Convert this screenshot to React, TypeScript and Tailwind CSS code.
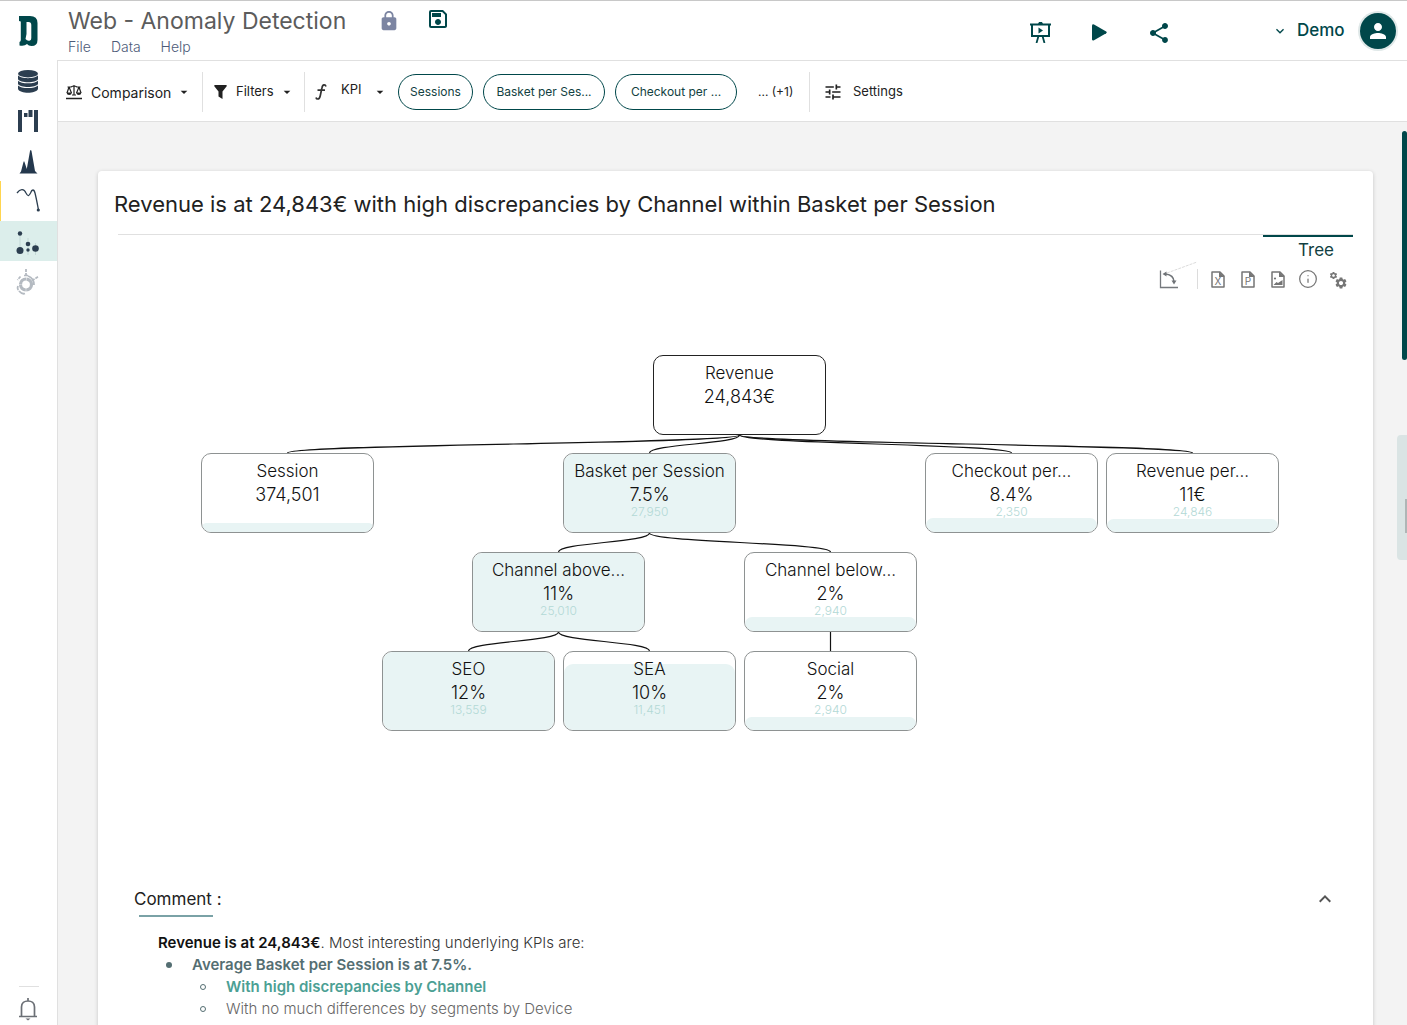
import { ReactNode } from "react";
import {
  MdArrowDropDown,
  MdExpandLess,
  MdExpandMore,
  MdLock,
  MdOutlineSave,
  MdPerson,
  MdSettings,
  MdShare,
  MdTune,
} from "react-icons/md";
import { Info } from "lucide-react";

const NODE_WIDTH = 173;
const NODE_HEIGHT = 80;

type TreeNode = {
  id: string;
  parent?: string;
  x: number;
  y: number;
  label: string;
  value: string;
  count?: string;
  fill: number;
};

const nodes: TreeNode[] = [
  { id: "revenue", x: 452, y: 0, label: "Revenue", value: "24,843€", fill: 0 },
  { id: "session", parent: "revenue", x: 0, y: 98, label: "Session", value: "374,501", fill: 9 },
  { id: "basket", parent: "revenue", x: 362, y: 98, label: "Basket per Session", value: "7.5%", count: "27,950", fill: 78 },
  { id: "checkout", parent: "revenue", x: 724, y: 98, label: "Checkout per...", value: "8.4%", count: "2,350", fill: 14 },
  { id: "perCheckout", parent: "revenue", x: 905, y: 98, label: "Revenue per...", value: "11€", count: "24,846", fill: 13 },
  { id: "above", parent: "basket", x: 271, y: 197, label: "Channel above...", value: "11%", count: "25,010", fill: 78 },
  { id: "below", parent: "basket", x: 543, y: 197, label: "Channel below...", value: "2%", count: "2,940", fill: 14 },
  { id: "seo", parent: "above", x: 181, y: 296, label: "SEO", value: "12%", count: "13,559", fill: 78 },
  { id: "sea", parent: "above", x: 362, y: 296, label: "SEA", value: "10%", count: "11,451", fill: 66 },
  { id: "social", parent: "below", x: 543, y: 296, label: "Social", value: "2%", count: "2,940", fill: 13 },
];

function linkPath(parent: TreeNode, child: TreeNode) {
  const sx = parent.x + NODE_WIDTH / 2;
  const sy = parent.y + NODE_HEIGHT;
  const tx = child.x + NODE_WIDTH / 2;
  const ty = child.y;
  const my = (sy + ty) / 2;
  return `M${sx} ${sy}C${sx} ${my} ${tx} ${my} ${tx} ${ty}`;
}

function Logo() {
  return (
    <svg width="20" height="31" viewBox="0 0 20 31" fill="#00474a" aria-hidden="true">
      <path
        fillRule="evenodd"
        d="M0 0H11Q18.500 0 18.500 7V24Q18.500 30 12.500 30Q9.500 30 8 28Q5.500 30.500 0.500 29.500V26Q1.800 25.500 1.800 24V5.500L0 5ZM7.500 6V18L6.500 23Q8.500 25.500 11 24.500Q12.300 24 12.300 22V9Q12.300 6 9.500 6Z"
      />
    </svg>
  );
}

function DatabaseIcon() {
  return (
    <svg width="20" height="23" viewBox="0 0 20 23" fill="#2c3e50" aria-hidden="true">
      <ellipse cx="10" cy="3.700" rx="10" ry="3.700" />
      <path d="M0 5.600C3 9 17 9 20 5.600V9.300C18 13.300 2 13.300 0 9.300Z" />
      <path d="M0 10.800C3 14.200 17 14.200 20 10.800V14C18 18 2 18 0 14Z" />
      <path d="M0 15.500C3 18.900 17 18.900 20 15.500V19C18 24 2 24 0 19Z" />
    </svg>
  );
}

function WaterfallIcon() {
  return (
    <svg width="20" height="22" viewBox="0 0 20 22" fill="#2c3e50" aria-hidden="true">
      <path d="M0 0H4V22H0ZM6 3H9.500V7H6ZM10.500 0H14.500V7H10.500ZM16 0H20V22H16Z" />
    </svg>
  );
}

function PeaksIcon() {
  return (
    <svg width="20" height="25" viewBox="0 0 20 25" fill="#24384d" aria-hidden="true">
      <path d="M1.500 24.500L3 22.500L5.500 13Q6 11.500 6.500 13L8.800 20L12 2Q12.800 0 13.500 2L17 22L19.500 24.500Z" />
    </svg>
  );
}

function CurveIcon() {
  return (
    <svg width="24" height="24" viewBox="0 0 24 24" aria-hidden="true">
      <path d="M1 5C4 1 8 0 10 5C12 9 13 8 14.500 5C16 1 18 1 19 5C20.500 11 21.500 17 22.500 22" fill="none" stroke="#2c3e50" strokeWidth="1.300" />
      <circle cx="22.300" cy="22" r="1.600" fill="#2c3e50" />
    </svg>
  );
}

function DotsIcon() {
  return (
    <svg width="24" height="24" viewBox="0 0 24 24" fill="#2c3e50" aria-hidden="true">
      <path d="M4 3V19M12 7V24M19.500 12V24" stroke="#c3d8d6" strokeWidth="1" />
      <circle cx="4" cy="2.500" r="2.200" />
      <circle cx="4" cy="19.500" r="3.500" />
      <circle cx="12" cy="13" r="2.300" />
      <circle cx="12" cy="19" r="1.700" />
      <circle cx="19.500" cy="17.500" r="3.300" />
    </svg>
  );
}

function RingIcon() {
  return (
    <svg width="24" height="27" viewBox="0 0 24 27" fill="none" stroke="#b4bac1" aria-hidden="true">
      <circle cx="10" cy="16.500" r="5.500" strokeWidth="3.200" strokeDasharray="8.200 0.440" />
      <path d="M3 23Q6 26.500 9 25.500M2 18Q1 21 2.500 22M12 8Q18 10 18 17" strokeWidth="1.800" />
      <path d="M4.500 8.500L1.500 12M10 8V1M16 12.500L22.500 8.500" strokeWidth="1.800" strokeDasharray="3 1" />
      <path d="M8 7.500H12" strokeWidth="1.500" />
    </svg>
  );
}

function BellIcon() {
  return (
    <svg width="20" height="23" viewBox="0 0 20 23" fill="none" stroke="#6b6f75" strokeWidth="1.700" aria-hidden="true">
      <path d="M10 0V3M1 18.500H19M3.500 18V9C3.500 5 6.500 3 10 3S16.500 5 16.500 9V18" />
      <path d="M7.500 20.500H12.500L10 22.500Z" fill="#6b6f75" stroke="none" />
    </svg>
  );
}

function ScaleIcon() {
  return (
    <svg width="16" height="16" viewBox="0 0 16 16" fill="none" stroke="#212121" strokeWidth="1.200" aria-hidden="true">
      <path d="M8 1V11M1.500 3H5Q8 1 11 3H14.500M3 3L1 9M3 3L5.500 9M13 3L10.500 9M13 3L15 9M6 11H10" />
      <path d="M0.500 8.500H6Q5.500 11 3.200 11T0.500 8.500ZM10 8.500H15.500Q15 11 12.800 11T10 8.500Z" fill="#212121" stroke="none" />
      <path d="M0 14.500H16" strokeWidth="1.500" />
    </svg>
  );
}

function FunnelIcon() {
  return (
    <svg width="13" height="14" viewBox="0 0 13 14" fill="#212121" aria-hidden="true">
      <path d="M0.500 0H12.500Q13 1 12.500 1.500L8.500 6.500V14L4.500 11.500V6.500L0.500 1.500Q0 1 0.500 0Z" />
    </svg>
  );
}

function FunctionIcon() {
  return (
    <svg width="12" height="16" viewBox="0 0 12 16" fill="none" stroke="#333" strokeWidth="1.700" aria-hidden="true">
      <path d="M11 2.500Q10.500 0.800 9 0.900Q7.400 1 6.900 4L5.200 12Q4.600 15 2.700 15Q1.300 15 1 13.500M2.500 6.200H10" />
    </svg>
  );
}

function PresentIcon() {
  return (
    <svg width="21" height="21" viewBox="0 0 21 21" fill="none" stroke="#00474a" strokeWidth="2" aria-hidden="true">
      <path d="M0 2.500H21M2 2V14M19 2V14M1 14H20" />
      <path d="M8.500 14L6.500 21M12.500 14L14.500 21" strokeWidth="1.800" />
      <path d="M8 2L9 0H12L13 2ZM8.500 5.500L13 8.500L8.500 11.500Z" fill="#00474a" stroke="none" />
    </svg>
  );
}

function PlayIcon() {
  return (
    <svg width="15" height="17" viewBox="0 0 15 17" fill="#00474a" aria-hidden="true">
      <path d="M0 1.500Q0.300 -0.200 2 0.500L14.200 7.500Q15.300 8.300 14.200 9.300L2 16.300Q0.300 17 0 15.500Z" />
    </svg>
  );
}

function AxesIcon() {
  return (
    <svg width="40" height="28" viewBox="0 0 40 28" fill="none" aria-hidden="true">
      <path d="M2.500 9.500V26.500H20" stroke="#75797d" strokeWidth="1.300" />
      <path d="M8 13Q15.500 14 16 20.500" stroke="#6f7377" strokeWidth="1.500" />
      <path d="M4.500 13L8.500 10.500V15.500ZM13.500 19.500H18.500L16 23.500Z" fill="#6f7377" />
      <path d="M9 12L39 1" stroke="#dcdcdc" strokeDasharray="3 1" />
    </svg>
  );
}

function FileIcon({ letter }: { letter?: string }) {
  return (
    <svg width="14" height="17" viewBox="0 0 14 17" fill="none" stroke="#757575" strokeWidth="1.500" aria-hidden="true">
      <path d="M1 1H9L13 5V16H1Z" strokeLinejoin="round" />
      <path d="M8 0.500L13.500 6H8Z" fill="#757575" stroke="none" />
      {letter ? (
        <text x="7" y="14" textAnchor="middle" fontSize="10" fontFamily="Inter, sans-serif" fill="#757575" stroke="none">
          {letter}
        </text>
      ) : (
        <>
          <path d="M2.500 14L5.500 11L7 12L11.500 9V14Z" fill="#757575" stroke="none" />
          <circle cx="4" cy="7.500" r="1.100" fill="#757575" stroke="none" />
        </>
      )}
    </svg>
  );
}

function SideItem({ label, active, marked, children }: { label: string; active?: boolean; marked?: boolean; children: ReactNode }) {
  return (
    <button
      aria-label={label}
      className={`flex h-10 w-full items-center justify-center pr-[2px] ${active ? "bg-[#dceeeb] pt-1" : ""} ${marked ? "border-l border-[#ffd54f] pb-[2px]" : ""}`}
    >
      {children}
    </button>
  );
}

function Chip({ children, wide }: { children: ReactNode; wide?: boolean }) {
  return (
    <button className={`h-9 shrink-0 rounded-full border border-[#00474a] text-center text-[12px] text-[#123f42] ${wide ? "w-[122px]" : "w-[75px]"}`}>
      {children}
    </button>
  );
}

function Divider() {
  return <div className="h-10 w-px shrink-0 bg-[#e0e0e0]" />;
}

function ToolButton({ label, children }: { label: string; children: ReactNode }) {
  return (
    <button aria-label={label} className="flex h-[30px] w-[30px] items-center justify-center text-[#757575]">
      {children}
    </button>
  );
}

function BulletRow({ hollow, children }: { hollow?: boolean; children: ReactNode }) {
  return (
    <div className="flex items-center">
      <span className="flex w-[34px] shrink-0 pl-2" aria-hidden="true">
        <span className={`h-[6px] w-[6px] rounded-full ${hollow ? "border border-[#546e72]" : "bg-[#546e72]"}`} />
      </span>
      {children}
    </div>
  );
}

function KpiTree() {
  const byId = new Map(nodes.map((node) => [node.id, node]));
  return (
    <div className="relative mx-auto h-[376px] w-[1078px]">
      <svg width="1078" height="376" className="absolute inset-0" fill="none" stroke="#111" strokeWidth="1.200" aria-hidden="true">
        {nodes.map((node) => {
          const parent = node.parent ? byId.get(node.parent) : undefined;
          return parent ? <path key={node.id} d={linkPath(parent, node)} /> : null;
        })}
      </svg>
      {nodes.map((node) => (
        <div
          key={node.id}
          style={{ left: node.x, top: node.y }}
          className={`absolute h-[80px] w-[173px] overflow-hidden rounded-[10px] border text-center font-light text-[#111] ${node.parent ? "border-[#8e9292]" : "border-[#222]"}`}
        >
          <div style={{ height: node.fill }} className="absolute inset-x-0 bottom-0 rounded-[9px] bg-[#e8f4f4]" />
          <div className="relative pt-[5px] whitespace-nowrap">
            <p className="text-[17px] leading-6">{node.label}</p>
            <p className="text-[18px] leading-6">{node.value}</p>
            {node.count && <p className="text-[12px] leading-[10px] text-[#b3d9d6]">{node.count}</p>}
          </div>
        </div>
      ))}
    </div>
  );
}

export default function App() {
  return (
    <div className="flex h-screen flex-col overflow-hidden bg-white font-['Inter',sans-serif] text-[#212121]">
      <header className="flex h-[61px] shrink-0 border-t border-t-[#c8c8c8]">
        <div className="flex w-[57px] shrink-0 justify-center pt-[15px]">
          <Logo />
        </div>
        <div className="flex min-w-0 grow border-b border-[#e0e0e0]">
          <div className="pl-[11px] pt-1">
            <div className="flex h-8 items-center">
              <h1 className="w-[310px] text-[23px] leading-8 whitespace-nowrap text-[#5c5c5c]">Web - Anomaly Detection</h1>
              <button aria-label="Lock" className="text-[#7c85a2]"><MdLock size={22} /></button>
              <button aria-label="Save" className="mb-1 ml-[26px] text-[#00474a]"><MdOutlineSave size={24} /></button>
            </div>
            <nav className="flex gap-5 text-[14px] leading-5 font-light text-[#4d5b78]">
              <a href="#file">File</a>
              <a href="#data">Data</a>
              <a href="#help">Help</a>
            </nav>
          </div>
          <div className="ml-auto flex items-center pt-1">
            <button aria-label="Present" className="flex w-[59px] justify-center"><PresentIcon /></button>
            <button aria-label="Play" className="flex w-[59px] justify-center"><PlayIcon /></button>
            <button aria-label="Share" className="flex w-[59px] justify-center text-[#00474a]"><MdShare size={24} /></button>
          </div>
          <button className="mr-[11px] ml-[84px] flex items-center text-[#00474a]">
            <MdExpandMore size={16} />
            <span className="ml-[9px] w-[63px] pb-[2px] text-left text-[17px] leading-5 font-medium">Demo</span>
            <span className="flex h-9 w-9 items-center justify-center rounded-full bg-[#00474a] text-white ring-2 ring-[#dfe8e8]">
              <MdPerson size={24} />
            </span>
          </button>
        </div>
      </header>

      <div className="flex min-h-0 grow">
        <aside className="flex w-[58px] shrink-0 flex-col border-r border-[#e0e0e0]">
          <SideItem label="Data sources"><DatabaseIcon /></SideItem>
          <SideItem label="Waterfall"><WaterfallIcon /></SideItem>
          <SideItem label="Distribution"><PeaksIcon /></SideItem>
          <SideItem label="Trend" marked><CurveIcon /></SideItem>
          <SideItem label="Anomalies" active><DotsIcon /></SideItem>
          <SideItem label="Sunburst"><RingIcon /></SideItem>
          <div className="mx-auto mt-auto w-5 border-t border-[#e0e0e0]" />
          <button aria-label="Notifications" className="flex h-[38px] items-center justify-center pt-[6px] pr-[2px]"><BellIcon /></button>
        </aside>

        <div className="flex min-w-0 grow flex-col">
          <div className="flex h-[61px] shrink-0 items-center border-b border-[#e0e0e0] pt-[2px] text-[13px] whitespace-nowrap">
            <button className="flex w-36 items-center pl-2">
              <ScaleIcon />
              <span className="w-[85px] pl-[9px] text-left text-[14px]">Comparison</span>
              <MdArrowDropDown size={16} className="ml-[9px]" />
            </button>
            <Divider />
            <button className="flex w-[101px] items-center pl-[11px]">
              <FunnelIcon />
              <span className="w-[52px] pl-[9px] text-left">Filters</span>
              <MdArrowDropDown size={16} />
            </button>
            <Divider />
            <button className="flex w-[93px] items-center pl-[10px]">
              <FunctionIcon />
              <span className="w-[45px] pb-1 pl-[14px] text-left">KPI</span>
              <MdArrowDropDown size={16} />
            </button>
            <div className="flex gap-[10px]">
              <Chip>Sessions</Chip>
              <Chip wide>Basket per Ses...</Chip>
              <Chip wide>Checkout per ...</Chip>
            </div>
            <button className="w-[72px] pl-[21px] text-left text-[12px]">... (+1)</button>
            <Divider />
            <button className="flex items-center gap-[10px] pl-[13px]">
              <MdTune size={20} />
              Settings
            </button>
          </div>

          <main className="relative min-h-0 grow overflow-hidden bg-[#f3f3f3] pt-[49px] pr-[34px] pl-10">
            <article className="rounded-[4px] bg-white pb-8 shadow-[0_1px_4px_rgba(0,0,0,0.18)]">
              <h2 className="px-4 pt-5 text-[22px] leading-[26px]">
                Revenue is at 24,843€ with high discrepancies by Channel within Basket per Session
              </h2>
              <div className="mx-5 mt-[17px] flex justify-end border-t border-[#e0e0e0]">
                <button className="w-[90px] border-t-2 border-[#00474a] pr-[19px] text-right text-[17px] leading-[26px] text-[#123f42]">Tree</button>
              </div>
              <div className="mt-px mr-5 flex h-[30px] items-center justify-end">
                <button aria-label="Rotate axes" className="-mr-px mb-2"><AxesIcon /></button>
                <div className="mr-[5px] h-5 w-px bg-[#dcdcdc]" />
                <ToolButton label="Export to Excel"><FileIcon letter="X" /></ToolButton>
                <ToolButton label="Export to PowerPoint"><FileIcon letter="P" /></ToolButton>
                <ToolButton label="Export as image"><FileIcon /></ToolButton>
                <ToolButton label="Information"><Info size={20} strokeWidth={1.5} /></ToolButton>
                <ToolButton label="Options">
                  <MdSettings size={9} className="mb-2" />
                  <MdSettings size={14} className="-ml-1 mt-2" />
                </ToolButton>
              </div>

              <div className="mt-[61px] pl-[9px]">
                <KpiTree />
              </div>

              <section className="mt-[156px] pr-9 pl-9">
                <div className="flex items-center justify-between">
                  <h3 className="text-[17px] leading-6">Comment :</h3>
                  <button aria-label="Collapse comment" className="text-[#555]"><MdExpandLess size={24} /></button>
                </div>
                <div className="mt-1 ml-[5px] h-[2px] w-[74px] bg-[#7aa2a6]" />
                <div className="mt-[15px] pl-6 text-[15px] leading-[22px] text-[#546e72]">
                  <p className="font-light text-[#333]">
                    <strong className="font-semibold text-[#111]">Revenue is at 24,843€</strong>. Most interesting underlying KPIs are:
                  </p>
                  <ul>
                    <li>
                      <BulletRow><span className="font-semibold">Average Basket per Session is at 7.5%.</span></BulletRow>
                      <ul className="pl-[34px]">
                        <li><BulletRow hollow><span className="font-semibold text-[#4ba094]">With high discrepancies by Channel</span></BulletRow></li>
                        <li><BulletRow hollow><span className="font-light text-[#666]">With no much differences by segments by Device</span></BulletRow></li>
                      </ul>
                    </li>
                  </ul>
                </div>
              </section>
            </article>
            <div className="absolute top-[9px] right-0 h-[229px] w-[5px] rounded-[3px] bg-[#00474a]" />
            <div className="absolute top-[313px] right-0 flex h-[125px] w-[10px] items-center justify-end rounded-l-[4px] bg-[#dae4e4]">
              <div className="mt-9 h-[34px] w-[2px] bg-[#aeb6b6]" />
            </div>
          </main>
        </div>
      </div>
    </div>
  );
}
